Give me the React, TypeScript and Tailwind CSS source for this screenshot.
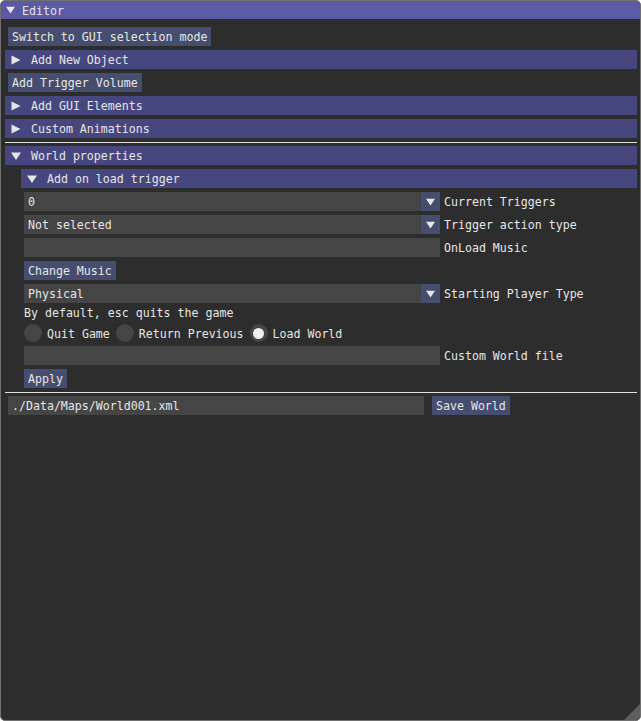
import React from "react";

const font = { fontFamily: '"DejaVu Sans Mono", "Liberation Mono", monospace' };

function TriRight() {
  return (
    <svg width="10" height="10" viewBox="0 0 10 10" className="shrink-0">
      <polygon points="0.5,0.5 9.5,5 0.5,9.5" fill="#e6e6e6" />
    </svg>
  );
}
function TriDown({ w = 10 }: { w?: number }) {
  return (
    <svg width={w} height="8" viewBox="0 0 10 8" className="shrink-0">
      <polygon points="0,0.5 10,0.5 5,8" fill="#e6e6e6" />
    </svg>
  );
}

function Header({ label, open, className = "" }: { label: string; open?: boolean; className?: string }) {
  return (
    <div className={`h-[19px] bg-[#47477f] flex items-start ${className}`}>
      <div className="w-[26px] h-[19px] pl-[6px] flex items-center">{open ? <TriDown /> : <TriRight />}</div>
      <span className="leading-[21px] h-[19px]">{label}</span>
    </div>
  );
}

function Button({ label }: { label: string }) {
  return (
    <div className="h-[19px] bg-[#464e6f] px-[4px] leading-[21px] self-start whitespace-pre shrink-0">{label}</div>
  );
}

function Combo({ value, label }: { value: string; label: string }) {
  return (
    <div className="flex items-start h-[19px]">
      <div className="w-[416px] h-[19px] bg-[#454545] flex">
        <div className="flex-1 px-[4px] leading-[21px] h-[19px] whitespace-pre">{value}</div>
        <div className="w-[19px] h-[19px] bg-[#464e6f] flex items-center justify-center">
          <TriDown w={9} />
        </div>
      </div>
      <span className="ml-[4px] leading-[21px] h-[19px] whitespace-pre">{label}</span>
    </div>
  );
}

function Input({ value = "", label, className = "" }: { value?: string; label?: string; className?: string }) {
  return (
    <div className={`flex items-start h-[19px] ${className}`}>
      <div className="w-[416px] h-[19px] bg-[#454545] px-[4px] leading-[21px] whitespace-pre">{value}</div>
      {label && <span className="ml-[4px] leading-[21px] h-[19px] whitespace-pre">{label}</span>}
    </div>
  );
}

function Radio({ label, checked }: { label: string; checked?: boolean }) {
  return (
    <div className="flex items-start h-[19px]">
      <div className="w-[18px] h-[18px] rounded-full bg-[#454545] flex items-center justify-center">
        {checked && <div className="w-[11px] h-[11px] rounded-full bg-[#f0f0f0]" />}
      </div>
      <span className="ml-[5px] leading-[20px] h-[19px] whitespace-pre">{label}</span>
    </div>
  );
}

function Separator() {
  return <div className="h-px bg-[#e0e0e0] -mx-[3px] mb-[-1px]" />;
}

export default function App() {
  return (
    <div className="w-[641px] h-[721px] bg-white">
      <div
        className="relative w-[641px] h-[721px] rounded-[5px] border border-[#707070] bg-[#2d2d2d] overflow-hidden text-[11.6px] text-[#e6e6e6]"
        style={font}
      >
        <div className="h-[18px] bg-[#5a5aa5] flex items-start">
          <div className="w-[21px] h-[18px] pl-[5px] flex items-center">
            <TriDown w={9} />
          </div>
          <span className="leading-[20px] h-[18px]">Editor</span>
        </div>
        <div className="pt-[8px] pl-[7px] pr-[6px] flex flex-col gap-[4px]">
          <Button label="Switch to GUI selection mode" />
          <Header label="Add New Object" className="-mx-[3px]" />
          <Button label="Add Trigger Volume" />
          <Header label="Add GUI Elements" className="-mx-[3px]" />
          <Header label="Custom Animations" className="-mx-[3px]" />
          <Separator />
          <Header label="World properties" open className="-mx-[3px]" />
          <div className="pl-[16px] flex flex-col gap-[4px]">
            <Header label="Add on load trigger" open className="-mx-[3px]" />
            <Combo value="0" label="Current Triggers" />
            <Combo value="Not selected" label="Trigger action type" />
            <Input label="OnLoad Music" />
            <Button label="Change Music" />
            <Combo value="Physical" label="Starting Player Type" />
            <div className="h-[12px] leading-[12px] whitespace-pre">By default, esc quits the game</div>
            <div className="flex items-start gap-[6px] mt-[1px]">
              <Radio label="Quit Game" />
              <Radio label="Return Previous" />
              <Radio label="Load World" checked />
            </div>
            <Input label="Custom World file" className="-mt-[1px]" />
            <Button label="Apply" />
          </div>
          <Separator />
          <div className="flex items-start gap-[8px]">
            <Input value="./Data/Maps/World001.xml" />
            <Button label="Save World" />
          </div>
        </div>
        <svg className="absolute right-0 bottom-0" width="16" height="16" viewBox="0 0 16 16">
          <polygon points="16,0 16,16 0,16" fill="#5e5e5e" />
        </svg>
      </div>
    </div>
  );
}
